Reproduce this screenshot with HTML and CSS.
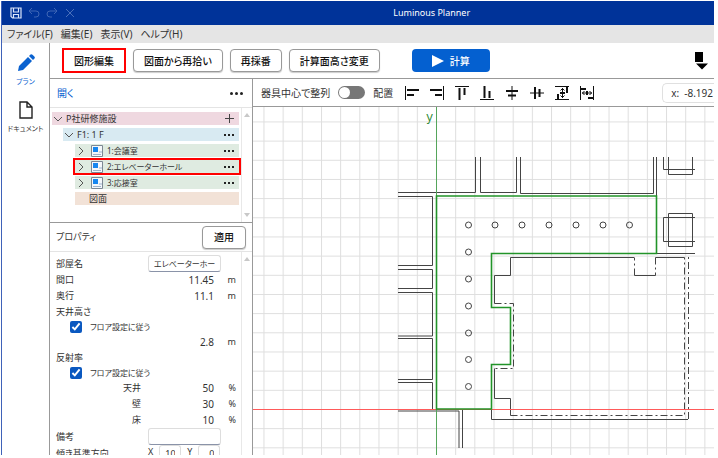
FILE: index.html
```
<!DOCTYPE html>
<html lang="ja">
<head>
  <meta charset="UTF-8" />
  <meta name="viewport" content="width=device-width, initial-scale=1.0"/>
  <title>Luminous Planner</title>
  <link rel="stylesheet" href="styles.css">
</head>
<body>
  <div class="app">
    <header class="titlebar">
      <div class="quick">
        <button aria-label="保存"><svg width="12" height="12" viewBox="0 0 12 12"><path d="M1 1h10v10H2.500L1 9.500z M3.500 1v4h5V1 M3.500 11V7.500h5V11" fill="none" stroke="#dce6fa" stroke-width="1.200"/></svg></button>
        <button aria-label="元に戻す"><svg width="12" height="12" viewBox="0 0 12 12"><path d="M4 1L1 4l3 3M1 4h7a3 3 0 0 1 0 6H6" fill="none" stroke="#3f66b5"/></svg></button>
        <button aria-label="やり直し"><svg width="12" height="12" viewBox="0 0 12 12"><path d="M8 1l3 3-3 3M11 4H4a3 3 0 0 0 0 6h2" fill="none" stroke="#3f66b5"/></svg></button>
        <button aria-label="閉じる"><svg width="12" height="12" viewBox="0 0 12 12"><path d="M2 2l8 8M10 2l-8 8" fill="none" stroke="#4a70bb"/></svg></button>
      </div>
      <h1>Luminous Planner</h1>
    </header>

    <nav class="menu">
      <button>ファイル(F)</button>
      <button>編集(E)</button>
      <button>表示(V)</button>
      <button>ヘルプ(H)</button>
    </nav>

    <div class="main">
      <aside class="rail">
        <button class="active">
          <svg width="18" height="18" viewBox="0 0 18 18"><path d="M1 17l1-5L11 3l4 4-9 9z M12 2l1.500-1.500q1-.8 2 .2l1.800 1.800q1 1 .2 2L16 6z" fill="#0a62d0"/></svg>
          <span>プラン</span>
        </button>
        <button>
          <svg width="18" height="18" viewBox="0 0 18 18"><path d="M3 1h7l5 5v11H3z M10 1v5h5" fill="none" stroke="#222" stroke-width="1.400"/></svg>
          <span>ドキュメント</span>
        </button>
      </aside>

      <div class="work">
        <div class="toolbar">
          <button class="btn marked">図形編集</button>
          <button class="btn">図面から再拾い</button>
          <button class="btn">再採番</button>
          <button class="btn">計算面高さ変更</button>
          <button class="btn primary"><svg width="12" height="12" viewBox="0 0 12 12"><path d="M0 0l12 6-12 6z" fill="#fff"/></svg>計算</button>
          <button class="down" aria-label="下へ"><svg width="16" height="18" viewBox="0 0 16 18"><path d="M2 0h8v10H2z M3 11.500h12L9 17.500z" fill="#000"/></svg></button>
        </div>

        <div class="panes">
          <div class="side">
            <div class="side-head">
              <a href="#">開く</a>
              <button class="dots big" aria-label="メニュー"><i></i><i></i><i></i></button>
            </div>

            <div class="scroller tree-area">
              <ul class="tree">
                <li class="pink"><svg class="chev" viewBox="0 0 8 8"><path d="M0 2l4 4 4-4"/></svg><span>P社研修施設</span><button class="plus" aria-label="追加"><svg width="9" height="9" viewBox="0 0 9 9"><path d="M4.500 0v9M0 4.500h9" stroke="#444"/></svg></button></li>
                <li class="blue"><svg class="chev" viewBox="0 0 8 8"><path d="M0 2l4 4 4-4"/></svg><span>F1: 1 F</span><button class="dots" aria-label="メニュー"><i></i><i></i><i></i></button></li>
                <li class="green"><svg class="chev" viewBox="0 0 8 8"><path d="M2 0l4 4-4 4"/></svg><svg class="room" viewBox="0 0 12 12"><path d="M.5.5h11v11H.5z" fill="#f4f7fa" stroke="#7c8894"/><path d="M2 2h5v5H2z" fill="#1686ef"/><path d="M8 7h3M2 9.500h8" stroke="#9db4cc"/></svg><span>1:会議室</span><button class="dots" aria-label="メニュー"><i></i><i></i><i></i></button></li>
                <li class="green selected"><svg class="chev" viewBox="0 0 8 8"><path d="M2 0l4 4-4 4"/></svg><svg class="room" viewBox="0 0 12 12"><path d="M.5.5h11v11H.5z" fill="#f4f7fa" stroke="#7c8894"/><path d="M2 2h5v5H2z" fill="#1686ef"/><path d="M8 7h3M2 9.500h8" stroke="#9db4cc"/></svg><span>2:エレベーターホール</span><button class="dots" aria-label="メニュー"><i></i><i></i><i></i></button></li>
                <li class="green"><svg class="chev" viewBox="0 0 8 8"><path d="M2 0l4 4-4 4"/></svg><svg class="room" viewBox="0 0 12 12"><path d="M.5.5h11v11H.5z" fill="#f4f7fa" stroke="#7c8894"/><path d="M2 2h5v5H2z" fill="#1686ef"/><path d="M8 7h3M2 9.500h8" stroke="#9db4cc"/></svg><span>3:応接室</span><button class="dots" aria-label="メニュー"><i></i><i></i><i></i></button></li>
                <li class="orange"><span>図面</span></li>
              </ul>
              <div class="bar"><svg width="6" height="4" viewBox="0 0 6 4"><path d="M0 4l3-4 3 4z"/></svg><svg width="6" height="4" viewBox="0 0 6 4"><path d="M0 0l3 4 3-4z"/></svg></div>
            </div>

            <div class="prop-head">
              <h2>プロパティ</h2>
              <button class="btn">適用</button>
            </div>

            <div class="scroller prop-area">
              <form class="props">
                <div class="row field"><label for="room">部屋名</label><input class="text" id="room" value="エレベーターホー"></div>
                <div class="row"><span>間口</span><b>11.45</b><em>m</em></div>
                <div class="row"><span>奥行</span><b>11.1</b><em>m</em></div>
                <div class="row low"><span>天井高さ</span></div>
                <div class="row low check"><input type="checkbox" id="floor1" checked><label for="floor1">フロア設定に従う</label></div>
                <div class="row"><b>2.8</b><em>m</em></div>
                <div class="row low"><span>反射率</span></div>
                <div class="row low check"><input type="checkbox" id="floor2" checked><label for="floor2">フロア設定に従う</label></div>
                <div class="row sub"><span>天井</span><b>50</b><em>%</em></div>
                <div class="row sub"><span>壁</span><b>30</b><em>%</em></div>
                <div class="row sub"><span>床</span><b>10</b><em>%</em></div>
                <div class="row field"><label for="note">備考</label><input class="text" id="note"></div>
                <div class="row field"><span>傾き基準方向</span><div class="xy"><label for="dx">X</label><input class="num" id="dx" value="10"><label for="dy">Y</label><input class="num" id="dy" value="0"></div></div>
              </form>
              <div class="bar"><svg width="6" height="4" viewBox="0 0 6 4"><path d="M0 4l3-4 3 4z"/></svg></div>
            </div>
          </div>

          <div class="view">
            <div class="view-tools">
              <label for="center">器具中心で整列</label>
              <input type="checkbox" class="toggle" id="center">
              <span>配置</span>
              <div class="align">
                <button aria-label="左揃え"><svg viewBox="0 0 14 14"><path d="M.5 0v14" /><path d="M2 4h12M2 9h7" class="thick"/></svg></button>
                <button aria-label="右揃え"><svg viewBox="0 0 14 14"><path d="M13.500 0v14"/><path d="M0 4h12M5 9h7" class="thick"/></svg></button>
                <button aria-label="上揃え"><svg viewBox="0 0 14 14"><path d="M0 .5h14"/><path d="M4.500 2v12M9.500 2v7" class="thick"/></svg></button>
                <button aria-label="下揃え"><svg viewBox="0 0 14 14"><path d="M0 13.500h14"/><path d="M4.500 0v12M9.500 5v7" class="thick"/></svg></button>
                <button aria-label="左右中央揃え"><svg viewBox="0 0 14 14"><path d="M7 0v14"/><path d="M1 5h12M3 9.500h8" class="thick"/></svg></button>
                <button aria-label="上下中央揃え"><svg viewBox="0 0 14 14"><path d="M0 7h14"/><path d="M5 1v12M9.500 3v8" class="thick"/></svg></button>
                <button aria-label="上下等間隔"><svg viewBox="0 0 14 14"><path d="M0 .5h14M0 13.500h14M7.500 2v10M5.500 4.500l2-2 2 2M5.500 9.500l2 2 2-2"/><path d="M3 8v5M12 1v6M5 7h5" class="thick"/></svg></button>
                <button aria-label="左右等間隔"><svg viewBox="0 0 14 14"><path d="M.5 0v14M13.500 0v14M2 7h10M4.500 5l-2 2 2 2M9.500 5l2 2-2 2"/><path d="M1 3h5M8 12h5M7 5v4" class="thick"/></svg></button>
              </div>
              <div class="coords"><span>x:</span><span>-8.192</span></div>
            </div>

            <!-- drawing, (0,0) is the plan origin where the axes cross -->
            <svg class="canvas">
              <defs>
                <pattern id="grid" width="19.170" height="19.170" patternUnits="userSpaceOnUse">
                  <path d="M0 .5h19.170M.5 0v19.170" stroke="#dedede" fill="none"/>
                </pattern>
              </defs>
              <g transform="translate(183 302)">
                <rect x="-383" y="-575" width="3000" height="3000" fill="url(#grid)"/>

                <g class="wall">
                  <path d="M-38-216.500H39.500V-252M44.500-252V-216.500H80.500V-252M84.500-252V-215.500H217.500V-252M220.500-252V-213"/>
                  <path d="M-38-212.500H-3.500V-143.500H-38M-38-139.500H-3.500V-120.500H-38M-38-116.500H-3.500V-73H-38M-38-70.500H-3.500V-29.500H-38M-38-26.500H-3.500V.5M-38 2H23V39M26.500 1V39"/>
                  <path d="M198-151.500H74.500V-133.500H58.500V-105.500M58.500-40.500V-10.500H74.500V6.500M248.500-151.500H219.500M219.500-133.500H198.500M55.500 0V10.500H252M220-155.500H259"/>
                  <path d="M227.500-252V-239.500H259M232.500-252V-234.500H256.500V-252M232.500-195.500H256.500V-162.500H232.500zM259-191.500H227.500V-167.500H259"/>
                  <path class="dash" d="M58.500-105.500H77.500V-40.500H58.500M74.500 6.500H248.500V-151.500M219.500-151.500V-133.500M198.500-133.500V-151.500M252.500 10V-152"/>
                </g>

                <path class="x-axis" d="M-1000 .5H2000"/>
                <path class="y-axis" d="M.5-1000V1000"/>
                <text class="axis" x="-10" y="-288">y</text>

                <path d="M.5-213H220.500V-155.500H55.500V-101.500H74.500V-44.500H55.500V0H.5z" fill="none" stroke="#229429" stroke-width="1.600"/>

                <g class="lamp">
                  <circle cx="32.500" cy="-184" r="3"/><circle cx="59" cy="-184" r="3"/><circle cx="86" cy="-184" r="3"/><circle cx="113" cy="-184" r="3"/><circle cx="140" cy="-184" r="3"/><circle cx="167" cy="-184" r="3"/><circle cx="193.500" cy="-184" r="3"/>
                  <circle cx="32.500" cy="-157" r="3"/><circle cx="32.500" cy="-130" r="3"/><circle cx="32.500" cy="-103" r="3"/><circle cx="32.500" cy="-76" r="3"/><circle cx="32.500" cy="-49.500" r="3"/><circle cx="32.500" cy="-22.500" r="3"/>
                </g>
              </g>
            </svg>
          </div>
        </div>
      </div>
    </div>
  </div>
</body>
</html>
```
FILE: styles.css
```
* {
  box-sizing: border-box;
}
body {
  margin: 0;
  padding: 1px 4px 3px 1px;
  height: 100vh;
  background: #fff;
  color: #333;
  font-family: 'Noto Sans', 'Noto Sans CJK JP', sans-serif;
  font-feature-settings: "palt";
  font-size: 10px;
  line-height: 14px;
}
button, input {
  margin: 0;
  padding: 0;
  border: none;
  background: none;
  color: inherit;
  font: inherit;
  font-feature-settings: inherit;
}
svg {
  display: block;
  flex: none;
}
.app {
  height: 100%;
  display: flex;
  flex-direction: column;
  overflow: hidden;
  border-left: 1px solid #3f62b8;
}

/* Title and menu */
.titlebar {
  display: flex;
  align-items: center;
  height: 24px;
  flex: none;
  background: #039;
  color: #fff;
}
.quick {
  flex: 11;
  display: flex;
  gap: 6px;
  padding-left: 8px;
}
.titlebar h1 {
  margin: 0;
  font-size: 9px;
  font-weight: normal;
}
.titlebar::after {
  content: "";
  flex: 7;
}
.menu {
  display: flex;
  flex: none;
  gap: 8px;
  height: 18px;
  padding-left: 5px;
  background: #e5e5e5;
  white-space: nowrap;
}
.main {
  flex: 1;
  display: flex;
  min-height: 0;
}

/* Left rail */
.rail {
  width: 48px;
  flex: none;
  display: flex;
  flex-direction: column;
  gap: 12px;
  padding-top: 11px;
  border-right: 1px solid #999;
  font-size: 7px;
}
.rail button {
  display: flex;
  flex-direction: column;
  align-items: center;
  gap: 3px;
  white-space: nowrap;
}
.rail .active {
  color: #0a62d0;
}
.work {
  flex: 1;
  min-width: 0;
  display: flex;
  flex-direction: column;
}

/* Main toolbar */
.toolbar {
  display: flex;
  flex: none;
  align-items: center;
  gap: 7px;
  height: 36px;
  padding: 0 5px 0 12px;
  border-bottom: 1px solid #999;
}
.btn {
  height: 23px;
  padding: 0 10px;
  border: 1px solid #999;
  border-radius: 4px;
  background: #fff;
  box-shadow: 0 1px 1px #ccc;
  color: #111;
  font-weight: 500;
  white-space: nowrap;
}
.btn.marked {
  height: 25px;
  border: 2px solid #f00;
  border-radius: 0;
  box-shadow: none;
}
.btn.primary {
  display: flex;
  align-items: center;
  gap: 6px;
  margin-left: 25px;
  padding: 0 20px;
  border: none;
  background: #0460d0;
  box-shadow: none;
  color: #fff;
}
.down {
  margin-left: auto;
}
.panes {
  flex: 1;
  display: flex;
  min-height: 0;
}

/* Tree and properties */
.side {
  width: 203px;
  flex: none;
  display: flex;
  flex-direction: column;
  border-right: 1px solid #999;
}
.side-head {
  display: flex;
  flex: none;
  justify-content: space-between;
  align-items: center;
  height: 29px;
  padding: 0 9px 0 7px;
  border-bottom: 1px solid #e4e4e4;
}
.side-head a {
  color: #0a62d0;
  text-decoration: none;
}
.dots {
  display: flex;
  gap: 2px;
}
.dots i {
  width: 2px;
  height: 2px;
  background: #222;
}
.dots.big i {
  width: 3px;
  height: 3px;
  border-radius: 2px;
}
.scroller {
  display: flex;
  min-height: 0;
}
.tree-area {
  flex: none;
  height: 115px;
  border-bottom: 1px solid #999;
}
.prop-area {
  flex: 1;
  overflow: hidden;
}
.bar {
  width: 11px;
  flex: none;
  display: flex;
  flex-direction: column;
  align-items: center;
  justify-content: space-between;
  padding: 5px 0;
  border-left: 1px solid #e8e8e8;
  fill: #c8c8c8;
}
.tree {
  flex: 1;
  display: flex;
  flex-direction: column;
  gap: 3px;
  margin: 0;
  padding: 4px 2px 0 2px;
  font-size: 9px;
  list-style: none;
}
.tree li {
  display: flex;
  align-items: center;
  gap: 4px;
  height: 13px;
  padding: 0 5px 0 2px;
  white-space: nowrap;
}
.tree li button {
  margin-left: auto;
}
.pink {
  background: #efd8e0;
}
.blue {
  margin-left: 11px;
  background: #d8eaf2;
}
.tree .green {
  margin-left: 23px;
  padding-left: 2px;
  background: #dfebe1;
  font-size: 8px;
}
.tree .orange {
  margin-left: 23px;
  padding-left: 14px;
  background: #f2e2d7;
}
.selected {
  outline: 2px solid #f00;
}
.chev {
  width: 8px;
  height: 8px;
  fill: none;
  stroke: #555;
}
.room {
  width: 12px;
  height: 12px;
  margin-left: 2px;
}
.prop-head {
  display: flex;
  flex: none;
  justify-content: space-between;
  align-items: center;
  height: 29px;
  padding: 0 6px;
  border-bottom: 1px solid #e4e4e4;
}
.prop-head h2 {
  margin: 0;
  font-size: 9px;
  font-weight: normal;
}
.prop-head .btn {
  padding: 0 11px;
}
.props {
  flex: 1;
  padding: 3px 5px 0 6px;
  font-size: 9px;
}
.row {
  display: flex;
  align-items: center;
  height: 16px;
  white-space: nowrap;
}
.row.low {
  height: 15px;
}
.row.field {
  height: 17px;
  justify-content: space-between;
  padding-right: 15px;
}
.row b {
  margin-left: auto;
  font-size: 10px;
  font-weight: normal;
}
.row em {
  width: 22px;
  font-style: normal;
  text-align: right;
}
.row.sub span {
  width: 85px;
  text-align: right;
}
.text, .num {
  height: 17px;
  border: 1px solid #ddd;
  border-bottom-color: #8a93a8;
  border-radius: 3px;
}
.text {
  width: 73px;
  padding: 0 5px;
  font-size: 8px;
}
.xy {
  display: flex;
  gap: 6px;
  width: 73px;
}
.num {
  width: 22px;
  padding: 0 5px;
  text-align: right;
}
.check {
  gap: 8px;
  padding-left: 14px;
  font-size: 8px;
}
.check input {
  width: 12px;
  height: 12px;
  accent-color: #0a58c0;
}

/* Drawing view */
.view {
  flex: 1;
  min-width: 0;
  display: flex;
  flex-direction: column;
}
.view-tools {
  display: flex;
  flex: none;
  align-items: center;
  gap: 8px;
  height: 28px;
  padding-left: 8px;
  border-bottom: 1px solid #999;
  white-space: nowrap;
}
.toggle {
  appearance: none;
  width: 27px;
  height: 13px;
  flex: none;
  border-radius: 7px;
  background: #777;
}
.toggle::before {
  content: "";
  display: block;
  width: 11px;
  height: 11px;
  margin: 1px;
  border-radius: 6px;
  background: #fff;
}
.align {
  display: flex;
  gap: 11px;
  padding-left: 4px;
}
.align svg {
  width: 14px;
  height: 14px;
  fill: none;
  stroke: #111;
}
.align .thick {
  stroke-width: 2;
}
.coords {
  display: flex;
  gap: 5px;
  margin-left: auto;
  padding: 2px 1px 2px 8px;
  border: 1px solid #e0e0e0;
  border-right: none;
  border-radius: 5px 0 0 5px;
}
.canvas {
  flex: 1;
  width: 100%;
  min-height: 0;
  overflow: hidden;
}
.x-axis {
  fill: none;
  stroke: #ff5a5a;
}
.y-axis {
  fill: none;
  stroke: #55a55b;
}
.axis {
  font-family: 'Liberation Mono', monospace;
  font-size: 12px;
  fill: #2e8a35;
}
.wall {
  fill: none;
  stroke: #444;
}
.dash {
  stroke-dasharray: 7 3 2 3;
}
.lamp {
  fill: none;
  stroke: #444;
}
```
